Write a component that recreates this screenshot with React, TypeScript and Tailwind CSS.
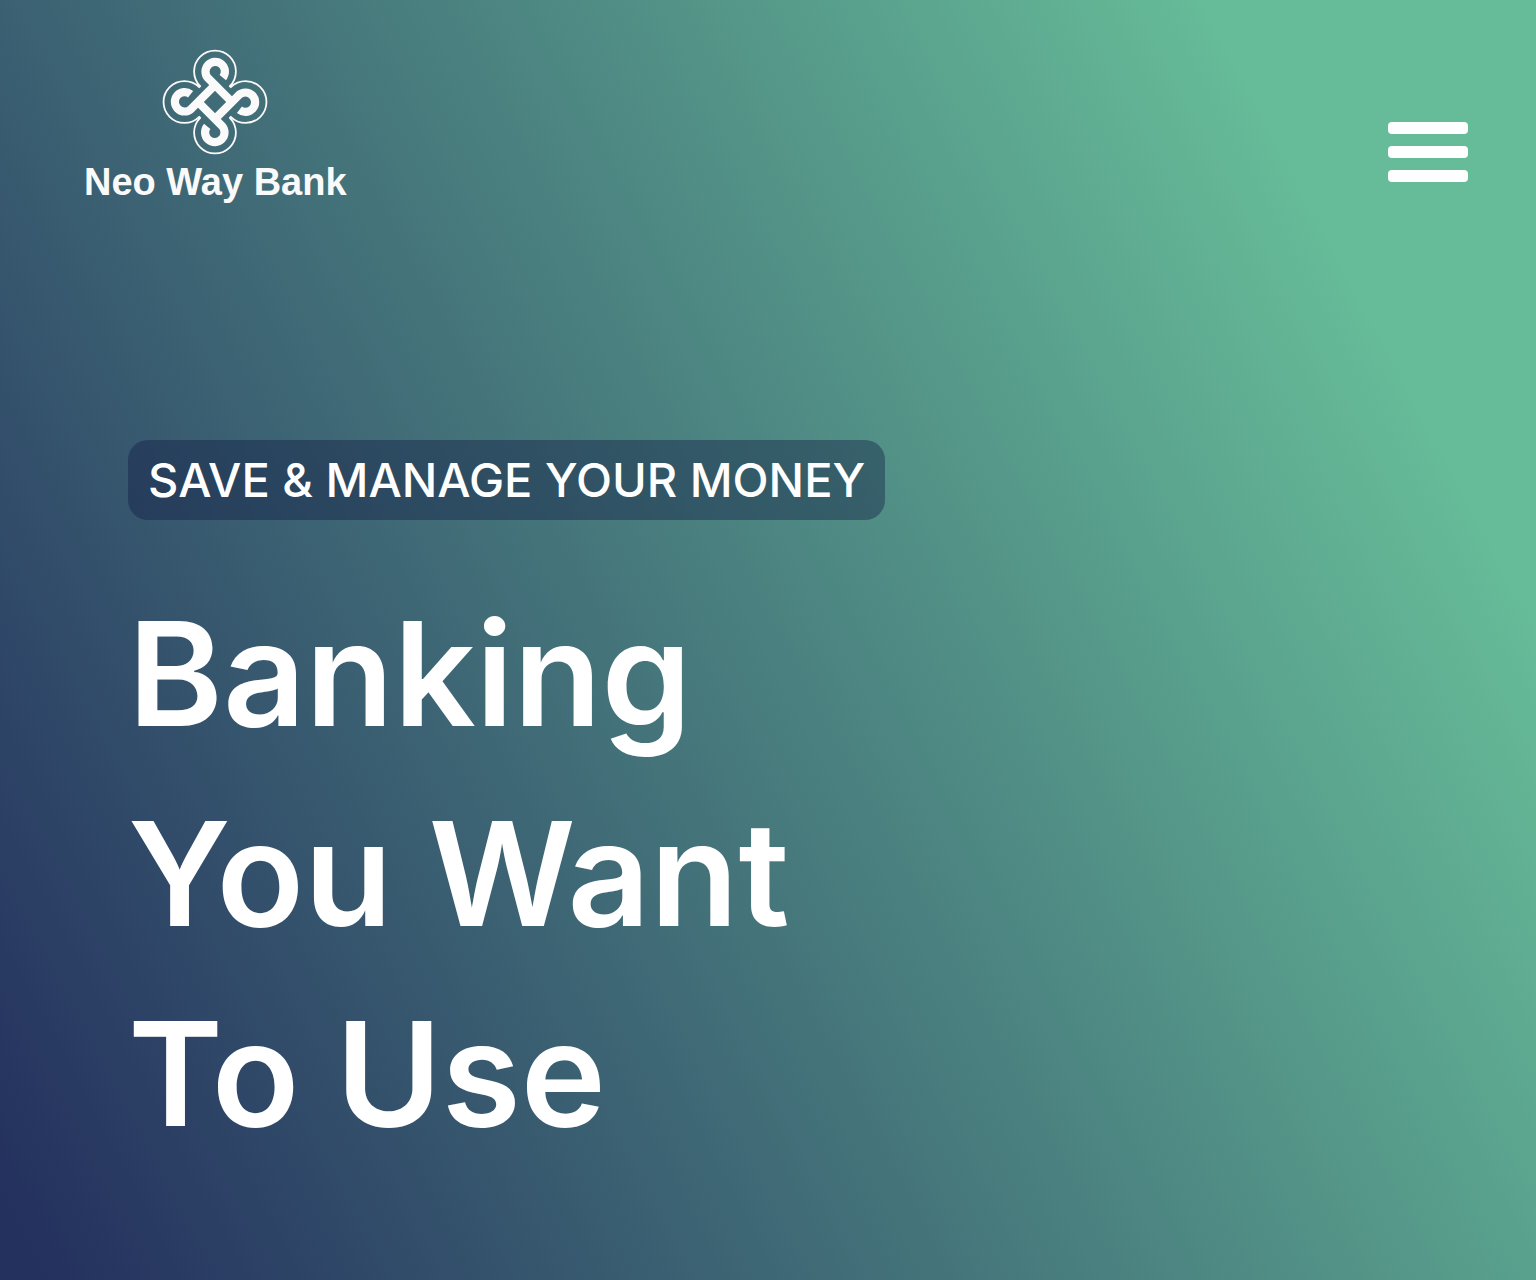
// One loop and tail of the knot, repeated around the centre
const KNOT = 'M59.8 27.6A9.7 9.7 0 1 0 45.1 28.2L67.8 50.9';

function BankLogo() {
  return (
    <svg viewBox="0 0 104 104" className="size-26 overflow-visible" fill="none" stroke="#fafafa" aria-hidden="true">
      <path
        strokeWidth="1.8"
        strokeLinejoin="round"
        d="M37.2 36.2A20.9 20.9 0 1 1 66.8 36.2L67.8 37.2A20.9 20.9 0 1 1 67.8 66.8L66.8 67.8A20.9 20.9 0 1 1 37.2 67.8L36.2 66.8A20.9 20.9 0 1 1 36.2 37.2Z"
      />
      <g strokeWidth="8.2">
        <path d={KNOT} />
        <path d={KNOT} transform="rotate(90 52 52)" />
        <path d={KNOT} transform="rotate(180 52 52)" />
        <path d={KNOT} transform="rotate(270 52 52)" />
      </g>
    </svg>
  );
}

export default function App() {
  return (
    <div className="min-h-screen bg-[linear-gradient(62deg,#24305e_2%,#66bb98_85%)] font-['Inter',sans-serif] text-white">
      <header className="flex items-end justify-between pt-[50px] pr-17 pl-21">
        <a href="#" className="flex flex-col items-center gap-2">
          <BankLogo />
          <span className="font-['Liberation_Sans',sans-serif] text-[38px] leading-10 font-bold text-[#fafafa]">
            Neo Way Bank
          </span>
        </a>
        <button type="button" aria-label="Open menu" className="mb-5 flex flex-col gap-3">
          <span className="h-3 w-20 rounded bg-white" />
          <span className="h-3 w-20 rounded bg-white" />
          <span className="h-3 w-20 rounded bg-white" />
        </button>
      </header>

      {/* Hero */}
      <main className="px-32 pt-[238px]">
        <p className="inline-block rounded-[20px] bg-[#101840]/40 px-5 text-[47px] leading-20 font-medium">
          SAVE &amp; MANAGE YOUR MONEY
        </p>
        <h1 className="pt-[54px] text-[144px] leading-[200px] font-semibold">
          Banking
          <br />
          You Want
          <br />
          To Use
        </h1>
      </main>
    </div>
  );
}
